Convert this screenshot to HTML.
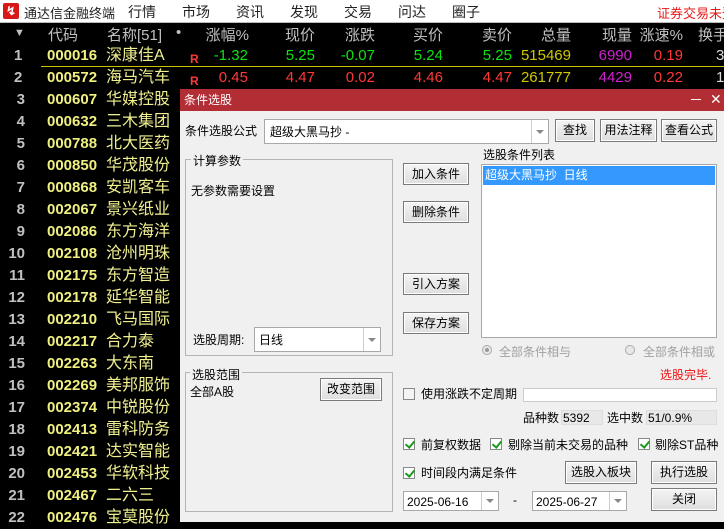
<!DOCTYPE html>
<html><head><meta charset="utf-8"><style>
*{margin:0;padding:0;box-sizing:border-box}
body{width:724px;height:526px;overflow:hidden;background:#000;font-family:"Liberation Sans","Noto Sans CJK SC",sans-serif;position:relative}
.a{position:absolute;white-space:nowrap}
.top{position:absolute;left:0;top:0;width:724px;height:23px;background:#fff;border-bottom:1px solid #bbb;overflow:hidden}
.m{position:absolute;top:2px;font-size:14px;color:#222;white-space:nowrap}
.h{font-size:15px;color:#c0c0c0;top:24px}
.r{font-size:15px;line-height:22px;height:22px}
.idx{color:#c0c0c0;font-weight:bold}
.cd{color:#f0f080;font-weight:bold;font-size:15px}
.nm{color:#f0f090;font-size:16px}
.g{color:#10e010}.rd{color:#ff3838}.yl{color:#d0c800}.mg{color:#d020d0}
.dlg{position:absolute;left:180px;top:89px;width:544px;height:433px;background:#f0f0f0;font-size:12px;color:#000;font-family:"Liberation Sans","Noto Sans CJK SC",sans-serif}
.dlg .a{line-height:14px}
.bt{position:absolute;border:1px solid #7a7a7a;background:linear-gradient(#f4f4f4,#dedede);text-align:center;font-size:12px;box-shadow:inset 0 0 0 1px #fff}
.box{position:absolute;background:#fff;border:1px solid #a8a8a8}
.dd{position:absolute;top:0;right:0;width:17px;height:100%;border-left:1px solid #ccc}
.dd:after{content:"";position:absolute;left:4px;top:50%;margin-top:-2px;border-left:4px solid transparent;border-right:4px solid transparent;border-top:4px solid #888}
.grp{position:absolute;border:1px solid #b4b4b4}
.gl{position:absolute;background:#f0f0f0;padding:0 2px;font-size:12px}
.cb{position:absolute;width:12px;height:12px;border:1px solid #888;background:#fff}
.ck:after{content:"";position:absolute;left:3px;top:0px;width:4px;height:7px;border:solid #1a9a1a;border-width:0 2px 2px 0;transform:rotate(40deg)}
</style></head><body>
<div class="top">
 <div class="a" style="left:3px;top:3px;width:16px;height:16px;background:#d81818;border-radius:2px;color:#fff;font-size:12px;text-align:center;line-height:16px;font-weight:bold">↯</div>
 <div class="m" style="left:24px;font-size:13px;top:3px">通达信金融终端</div>
 <div class="m" style="left:128px">行情</div>
 <div class="m" style="left:182px">市场</div>
 <div class="m" style="left:236px">资讯</div>
 <div class="m" style="left:290px">发现</div>
 <div class="m" style="left:344px">交易</div>
 <div class="m" style="left:398px">问达</div>
 <div class="m" style="left:452px">圈子</div>
 <div class="m" style="left:657px;color:#e81818;font-size:13px;top:3px">证券交易未登</div>
</div>
<div class="a h" style="left:14px;font-size:11px;top:27px">▼</div>
<div class="a h" style="left:48px">代码</div>
<div class="a h" style="left:107px">名称[51]</div>
<div class="a h" style="left:176px">•</div>
<div class="a h" style="right:475px">涨幅%</div>
<div class="a h" style="right:409px">现价</div>
<div class="a h" style="right:349px">涨跌</div>
<div class="a h" style="right:281px">买价</div>
<div class="a h" style="right:212px">卖价</div>
<div class="a h" style="right:153px">总量</div>
<div class="a h" style="right:92px">现量</div>
<div class="a h" style="right:41px">涨速%</div>
<div class="a h" style="left:698px">换手</div>

<div class="a r" style="top:45px;left:14px"><span class="idx">1</span></div>
<div class="a r cd" style="top:45px;left:47px">000016</div>
<div class="a r nm" style="top:45px;left:106px">深康佳A</div>
<div class="a r rd" style="top:48px;left:190px;font-size:12px;font-weight:bold">R</div>
<div class="a r g" style="top:45px;right:476px">-1.32</div>
<div class="a r g" style="top:45px;right:409px">5.25</div>
<div class="a r g" style="top:45px;right:349px">-0.07</div>
<div class="a r g" style="top:45px;right:281px">5.24</div>
<div class="a r g" style="top:45px;right:212px">5.25</div>
<div class="a r yl" style="top:45px;right:153px">515469</div>
<div class="a r mg" style="top:45px;right:92px">6990</div>
<div class="a r rd" style="top:45px;right:41px">0.19</div>
<div class="a r" style="top:45px;left:716px;color:#ddd">3</div>
<div class="a" style="left:41px;top:66px;width:683px;height:1px;background:#c8c000"></div>
<div class="a r" style="top:67px;left:14px"><span class="idx">2</span></div>
<div class="a r cd" style="top:67px;left:47px">000572</div>
<div class="a r nm" style="top:67px;left:106px">海马汽车</div>
<div class="a r rd" style="top:70px;left:190px;font-size:12px;font-weight:bold">R</div>
<div class="a r rd" style="top:67px;right:476px">0.45</div>
<div class="a r rd" style="top:67px;right:409px">4.47</div>
<div class="a r rd" style="top:67px;right:349px">0.02</div>
<div class="a r rd" style="top:67px;right:281px">4.46</div>
<div class="a r rd" style="top:67px;right:212px">4.47</div>
<div class="a r yl" style="top:67px;right:153px">261777</div>
<div class="a r mg" style="top:67px;right:92px">4429</div>
<div class="a r rd" style="top:67px;right:41px">0.22</div>
<div class="a r" style="top:67px;left:716px;color:#ddd">1</div>

<div id="rows"></div>
<script>
var d=[["000607","华媒控股"],["000632","三木集团"],["000788","北大医药"],["000850","华茂股份"],["000868","安凯客车"],["002067","景兴纸业"],["002086","东方海洋"],["002108","沧州明珠"],["002175","东方智造"],["002178","延华智能"],["002210","飞马国际"],["002217","合力泰"],["002263","大东南"],["002269","美邦服饰"],["002374","中锐股份"],["002413","雷科防务"],["002421","达实智能"],["002453","华软科技"],["002467","二六三"],["002476","宝莫股份"]];
var h="";
for(var i=0;i<d.length;i++){var t=89+22*i;var n=i+3;
h+='<div class="a r idx" style="top:'+t+'px;right:'+(724-25)+'px">'+n+'</div>';
h+='<div class="a r cd" style="top:'+t+'px;left:47px">'+d[i][0]+'</div>';
h+='<div class="a r nm" style="top:'+t+'px;left:106px">'+d[i][1]+'</div>';}
document.getElementById("rows").outerHTML=h;
</script>

<div class="dlg">
 <div class="a" style="left:0;top:0;width:544px;height:22px;background:#b32d34;color:#fff;font-size:12px;line-height:22px;padding-left:4px">条件选股</div>
 <div class="a" style="left:511px;top:10px;width:10px;height:1px;background:#fff"></div>
 <div class="a" style="left:530px;top:1px;color:#fff;font-size:14px;line-height:18px">✕</div>

 <div class="a" style="left:5px;top:35px">条件选股公式</div>
 <div class="box" style="left:84px;top:30px;width:285px;height:25px"><span class="a" style="left:5px;top:5px">超级大黑马抄 -</span><div class="dd"></div></div>
 <div class="bt" style="left:375px;top:30px;width:40px;height:23px;line-height:21px">查找</div>
 <div class="bt" style="left:420px;top:30px;width:57px;height:23px;line-height:21px">用法注释</div>
 <div class="bt" style="left:481px;top:30px;width:56px;height:23px;line-height:21px">查看公式</div>

 <div class="grp" style="left:5px;top:70px;width:208px;height:197px"></div>
 <div class="gl" style="left:11px;top:63px">计算参数</div>
 <div class="a" style="left:11px;top:95px">无参数需要设置</div>
 <div class="a" style="left:13px;top:244px">选股周期:</div>
 <div class="box" style="left:74px;top:238px;width:127px;height:25px"><span class="a" style="left:4px;top:5px">日线</span><div class="dd"></div></div>

 <div class="bt" style="left:223px;top:74px;width:66px;height:22px;line-height:20px">加入条件</div>
 <div class="bt" style="left:223px;top:112px;width:66px;height:22px;line-height:20px">删除条件</div>
 <div class="bt" style="left:223px;top:184px;width:66px;height:22px;line-height:20px">引入方案</div>
 <div class="bt" style="left:223px;top:223px;width:66px;height:22px;line-height:20px">保存方案</div>

 <div class="a" style="left:303px;top:59px">选股条件列表</div>
 <div class="box" style="left:301px;top:75px;width:236px;height:174px"><div class="a" style="left:1px;top:1px;width:232px;height:19px;background:#3399ff;color:#fff;padding-left:2px;line-height:19px">超级大黑马抄&nbsp;&nbsp;日线</div></div>

 <div class="a" style="left:302px;top:256px;width:10px;height:10px;border-radius:50%;border:1px solid #aaa;background:#e8e8e8"><div class="a" style="left:2px;top:2px;width:4px;height:4px;border-radius:50%;background:#999"></div></div>
 <div class="a" style="left:319px;top:256px;color:#a0a0a0">全部条件相与</div>
 <div class="a" style="left:445px;top:256px;width:10px;height:10px;border-radius:50%;border:1px solid #aaa;background:#e8e8e8"></div>
 <div class="a" style="left:463px;top:256px;color:#a0a0a0">全部条件相或</div>

 <div class="grp" style="left:5px;top:283px;width:208px;height:140px"></div>
 <div class="gl" style="left:10px;top:277px">选股范围</div>
 <div class="a" style="left:10px;top:296px">全部A股</div>
 <div class="bt" style="left:140px;top:289px;width:62px;height:23px;line-height:21px">改变范围</div>

 <div class="a" style="left:480px;top:279px;color:#f01010">选股完毕.</div>
 <div class="cb" style="left:223px;top:299px;background:#f4f4f4"></div>
 <div class="a" style="left:241px;top:298px">使用涨跌不定周期</div>
 <div class="box" style="left:343px;top:299px;width:194px;height:14px;border-color:#ccc"></div>
 <div class="a" style="left:343px;top:322px">品种数</div>
 <div class="a" style="left:381px;top:321px;width:42px;height:15px;border:1px solid #ddd;background:#e8e8e8;padding-left:1px">5392</div>
 <div class="a" style="left:427px;top:322px">选中数</div>
 <div class="a" style="left:466px;top:321px;width:71px;height:15px;border:1px solid #ddd;background:#e8e8e8;padding-left:1px">51/0.9%</div>

 <div class="cb ck" style="left:223px;top:349px"></div>
 <div class="a" style="left:241px;top:349px">前复权数据</div>
 <div class="cb ck" style="left:310px;top:349px"></div>
 <div class="a" style="left:328px;top:349px">剔除当前未交易的品种</div>
 <div class="cb ck" style="left:458px;top:349px"></div>
 <div class="a" style="left:475px;top:349px">剔除ST品种</div>

 <div class="cb ck" style="left:223px;top:378px"></div>
 <div class="a" style="left:241px;top:377px">时间段内满足条件</div>
 <div class="bt" style="left:385px;top:372px;width:72px;height:23px;line-height:21px">选股入板块</div>
 <div class="bt" style="left:471px;top:372px;width:66px;height:23px;line-height:21px">执行选股</div>
 <div class="bt" style="left:471px;top:399px;width:66px;height:23px;line-height:21px">关闭</div>

 <div class="box" style="left:223px;top:402px;width:96px;height:20px"><span class="a" style="left:3px;top:3px">2025-06-16</span><div class="dd"></div></div>
 <div class="a" style="left:333px;top:404px">-</div>
 <div class="box" style="left:352px;top:402px;width:95px;height:20px"><span class="a" style="left:3px;top:3px">2025-06-27</span><div class="dd"></div></div>
</div>
</body></html>
